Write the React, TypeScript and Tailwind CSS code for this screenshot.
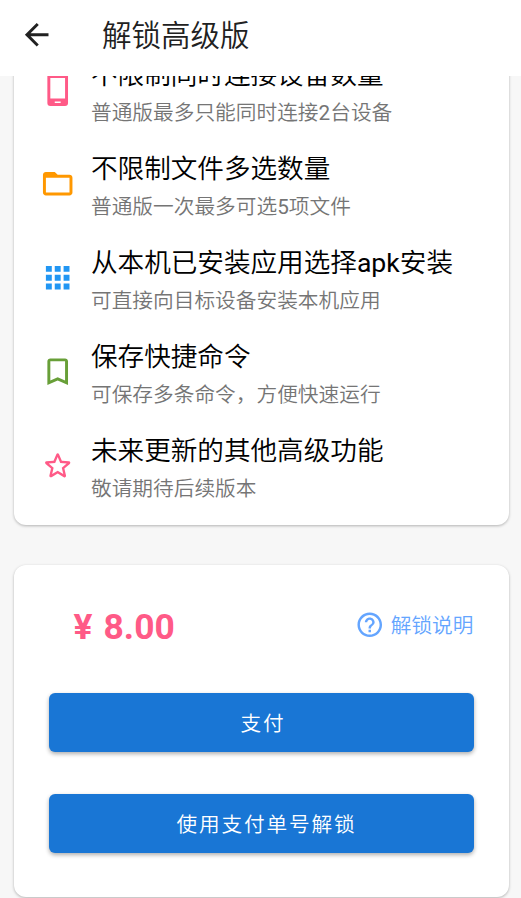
import type { ReactNode } from "react";
import { MdApps, MdArrowBack, MdBookmarkBorder, MdFolderOpen, MdHelpOutline } from "react-icons/md";

type Feature = { icon: ReactNode; title: ReactNode; detail: ReactNode };

function PhoneIcon() {
  return (
    <svg viewBox="0 0 24 24" width="1em" height="1em" fill="currentColor" className="text-[#ff5a87]">
      <path d="M17 1H7a2 2 0 0 0-2 2v18a2 2 0 0 0 2 2h10a2 2 0 0 0 2-2V3a2 2 0 0 0-2-2zm-3 20h-4v-1h4v1zm3-3H7V4h10v14z" />
    </svg>
  );
}

function StarIcon() {
  return (
    <svg viewBox="0 0 24 24" width="1em" height="1em" fill="currentColor" className="text-[#ff5a87]">
      <path d="M19.65 9.04l-4.84-.42-1.89-4.45c-.34-.81-1.5-.81-1.84 0L9.19 8.63l-4.83.41c-.88.07-1.24 1.17-.57 1.75l3.67 3.18-1.1 4.72c-.2.86.73 1.54 1.49 1.08l4.15-2.5 4.15 2.51c.76.46 1.69-.22 1.49-1.08l-1.1-4.73 3.67-3.18c.67-.58.32-1.68-.56-1.75zM12 15.4l-3.76 2.27 1-4.28-3.32-2.88 4.38-.38L12 6.1l1.71 4.04 4.38.38-3.32 2.88 1 4.28L12 15.4z" />
    </svg>
  );
}

/** Latin letters and digits, set a step heavier than the Chinese text around them. */
function Latin({ children }: { children: ReactNode }) {
  return <span className="font-normal">{children}</span>;
}

const features: Feature[] = [
  {
    icon: <PhoneIcon />,
    title: "不限制同时连接设备数量",
    detail: <>普通版最多只能同时连接<Latin>2</Latin>台设备</>,
  },
  {
    icon: <MdFolderOpen className="text-[#ff9800]" />,
    title: "不限制文件多选数量",
    detail: <>普通版一次最多可选<Latin>5</Latin>项文件</>,
  },
  {
    icon: <MdApps className="text-[#2196f3]" />,
    title: <>从本机已安装应用选择<Latin>apk</Latin>安装</>,
    detail: "可直接向目标设备安装本机应用",
  },
  {
    icon: <MdBookmarkBorder className="text-[#689f38]" />,
    title: "保存快捷命令",
    detail: "可保存多条命令，方便快速运行",
  },
  { icon: <StarIcon />, title: "未来更新的其他高级功能", detail: "敬请期待后续版本" },
];

const cardShadow = "shadow-[0_1px_3px_rgba(0,0,0,0.28)]";

function FeatureRow({ icon, title, detail }: Feature) {
  return (
    <li className="flex h-[94px] items-center pl-[26.4px]">
      <span className="mr-[15.2px] pb-[2px] text-[35.4px]">{icon}</span>
      <div className="whitespace-nowrap pt-[5px]">
        <div className="h-[38px] text-[26.6px] leading-[38px] text-black">{title}</div>
        <div className="h-[37px] text-[20.7px] leading-[38px] text-[#757575]">{detail}</div>
      </div>
    </li>
  );
}

function PrimaryButton({ children, nudge }: { children: ReactNode; nudge: string }) {
  return (
    <button
      className={`h-[59px] w-full rounded-[6px] bg-[#1976d5] pt-[3px] text-[20.65px] tracking-[1.85px] text-white shadow-[0_2px_4px_rgba(0,0,0,0.32)] ${nudge}`}
    >
      {children}
    </button>
  );
}

export default function App() {
  return (
    <div className="flex h-[898px] w-[521px] flex-col overflow-hidden bg-[#f7f7f7] font-[Roboto,'Noto_Sans_CJK_SC',sans-serif] font-[350]">
      <header className="z-10 flex h-[76px] shrink-0 items-center bg-white pb-[6px] pl-[18.5px] text-[#212121]">
        <MdArrowBack className="text-[35.4px]" />
        <h1 className="ml-[48px] pt-[2px] text-[29.5px] leading-[40px] font-[350]">解锁高级版</h1>
      </header>
      <main className="min-h-0 flex-1 overflow-hidden pl-[14px] pr-[12px]">
        <ul className={`-mt-[32px] rounded-b-[12px] bg-white pb-[11px] ${cardShadow}`}>
          {features.map((f, i) => (
            <FeatureRow key={i} {...f} />
          ))}
        </ul>
        <section className={`mt-[40px] h-[332px] rounded-[12px] bg-white px-[35px] pt-[36px] ${cardShadow}`}>
          <div className="flex h-[48px] items-center justify-between pl-[24.6px]">
            <span className="pt-[6px] text-[35.4px] font-bold text-[#ff5a87] [word-spacing:2.2px]">¥ 8.00</span>
            <a className="flex items-center gap-[6px] pr-[0.6px] text-[20.65px] text-[#64a5ff]">
              <MdHelpOutline className="text-[29.5px]" />
              <span className="pt-[2px]">解锁说明</span>
            </a>
          </div>
          <div className="mt-[44px] flex flex-col gap-[42px]">
            <PrimaryButton nudge="pl-[3px]">支付</PrimaryButton>
            <PrimaryButton nudge="pl-[10px]">使用支付单号解锁</PrimaryButton>
          </div>
        </section>
      </main>
    </div>
  );
}
